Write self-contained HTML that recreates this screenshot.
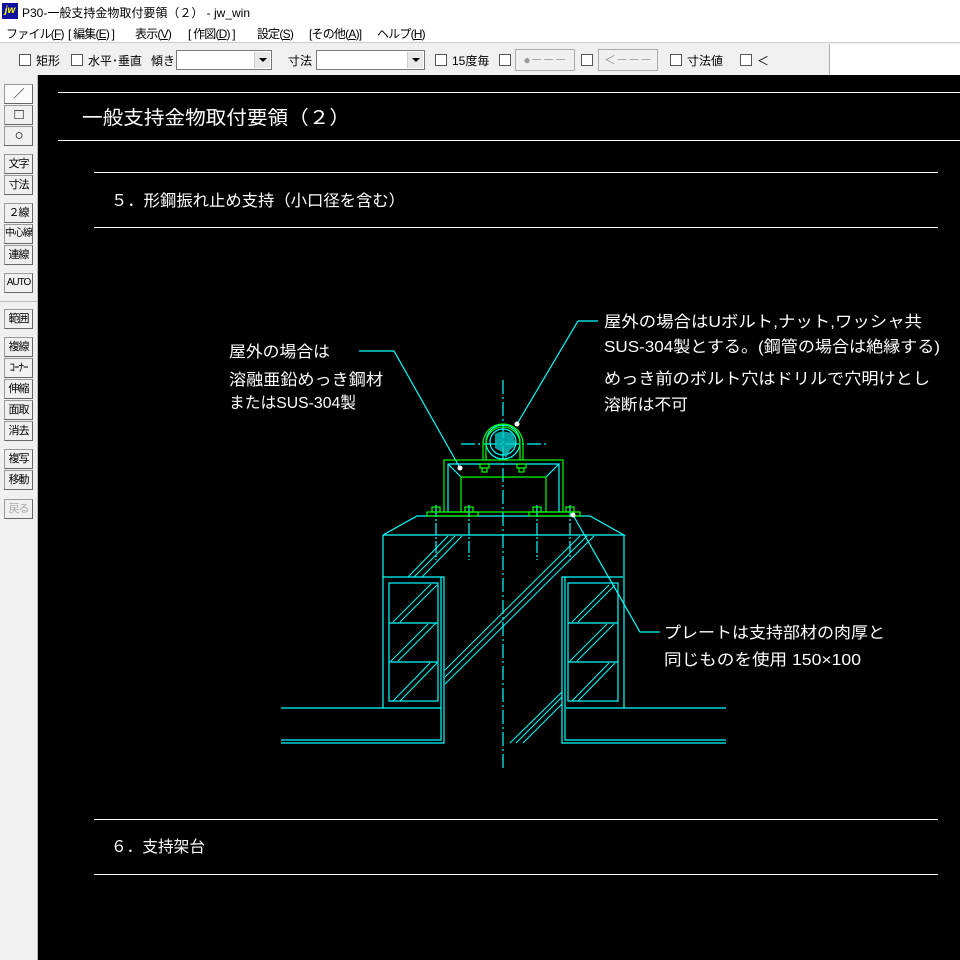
<!DOCTYPE html>
<html><head><meta charset="utf-8"><style>
*{margin:0;padding:0;box-sizing:border-box}
body{width:960px;height:960px;overflow:hidden;background:#f0f0f0;font-family:"Liberation Sans","Noto Sans CJK JP",sans-serif;font-size:12px;color:#000;position:relative}
.title{position:absolute;left:0;top:0;width:960px;height:22px;background:#fff;}
.title span{position:absolute;left:22px;top:4px;font-size:12px}
.logo{position:absolute;left:2px;top:3px;width:16px;height:16px;background:#1010a0;color:#ff0;font-weight:bold;font-style:italic;font-size:10px;line-height:16px;text-align:center}
.menu{position:absolute;left:0;top:22px;width:960px;height:21px;background:#fff;border-bottom:1px solid #ccc}
.menu span{position:absolute;top:3px;font-size:12px;letter-spacing:-0.8px;white-space:nowrap}
.tb{position:absolute;left:0;top:43px;width:960px;height:32px;background:#f0f0f0}
.tb span{position:absolute;top:9px;font-size:12px;white-space:nowrap}
.cb{position:absolute;top:11px;width:12px;height:12px;border:1px solid #555;background:#fff}
.combo{position:absolute;top:7px;height:20px;border:1px solid #777;background:#fff}
.combo i{position:absolute;right:1px;top:1px;width:16px;height:16px;background:#e8e8e8;border-left:1px solid #ccc}
.combo i:after{content:"";position:absolute;left:4px;top:6px;border-left:4px solid transparent;border-right:4px solid transparent;border-top:4px solid #000}
.gb{position:absolute;top:6px;height:22px;border:1px solid #aaa;background:#f0f0f0;color:#999;font-size:12px;text-align:center;line-height:20px}
.left{position:absolute;left:0;top:75px;width:38px;height:885px;background:#f0f0f0;border-right:1px solid #bbb}
.btn{position:absolute;left:4px;width:29px;height:20px;border:1px solid #999;border-right-color:#666;border-bottom-color:#666;background:#f0f0f0;font-size:11px;text-align:center;line-height:18px;letter-spacing:-1px;white-space:nowrap;overflow:hidden}
.canvas{position:absolute;left:38px;top:75px;width:922px;height:885px;background:#000}
</style></head><body>
<div class="title"><div class="logo">jw</div><span>P30-一般支持金物取付要領（２） - jw_win</span></div>
<div class="menu">
<span style="left:6px">ファイル(<u>F</u>)</span><span style="left:68px">[ 編集(<u>E</u>) ]</span><span style="left:135px">表示(<u>V</u>)</span><span style="left:188px">[ 作図(<u>D</u>) ]</span><span style="left:257px">設定(<u>S</u>)</span><span style="left:309px">[その他(<u>A</u>)]</span><span style="left:377px">ヘルプ(<u>H</u>)</span>
</div>
<div class="tb">
<div class="cb" style="left:19px"></div><span style="left:36px">矩形</span>
<div class="cb" style="left:71px"></div><span style="left:88px">水平･垂直</span><span style="left:151px">傾き</span>
<div class="combo" style="left:176px;width:96px"><i></i></div>
<span style="left:288px">寸法</span>
<div class="combo" style="left:316px;width:109px"><i></i></div>
<div class="cb" style="left:435px"></div><span style="left:452px">15度毎</span>
<div class="cb" style="left:499px"></div>
<div class="gb" style="left:515px;width:60px">●－－－</div>
<div class="cb" style="left:581px"></div>
<div class="gb" style="left:598px;width:60px">＜－－－</div>
<div class="cb" style="left:670px"></div><span style="left:687px">寸法値</span>
<div class="cb" style="left:740px"></div><span style="left:757px">＜</span>
<div style="position:absolute;left:829px;top:1px;width:131px;height:31px;background:#fff;border-left:1px solid #aaa"></div>
</div>
<div class="left">
<div class="btn" style="top:9px;background:#fafafa">／</div>
<div class="btn" style="top:30px;font-size:15px">□</div>
<div class="btn" style="top:51px;font-size:15px">○</div>
<div class="btn" style="top:79px">文字</div>
<div class="btn" style="top:100px">寸法</div>
<div class="btn" style="top:128px">２線</div>
<div class="btn" style="top:149px;font-size:10px">中心線</div>
<div class="btn" style="top:170px">連線</div>
<div class="btn" style="top:198px;font-size:10px">AUTO</div>
<div style="position:absolute;left:0;top:226px;width:38px;border-top:1px solid #bbb"></div>
<div class="btn" style="top:234px">範囲</div>
<div class="btn" style="top:262px">複線</div>
<div class="btn" style="top:283px">ｺｰﾅｰ</div>
<div class="btn" style="top:304px">伸縮</div>
<div class="btn" style="top:325px">面取</div>
<div class="btn" style="top:346px">消去</div>
<div class="btn" style="top:374px">複写</div>
<div class="btn" style="top:395px">移動</div>
<div class="btn" style="top:424px;color:#aaa">戻る</div>
</div>
<div class="canvas"></div>
<svg style="position:absolute;left:0;top:0" width="960" height="960" viewBox="0 0 960 960" font-family="Liberation Sans,Noto Sans CJK JP,sans-serif">
<g stroke="#fff" stroke-width="1" shape-rendering="crispEdges">
<line x1="58" y1="92.5" x2="960" y2="92.5"/><line x1="58" y1="140.5" x2="960" y2="140.5"/>
<line x1="94" y1="172.5" x2="938" y2="172.5"/><line x1="94" y1="227.5" x2="938" y2="227.5"/>
<line x1="94" y1="819.5" x2="938" y2="819.5"/><line x1="94" y1="874.5" x2="938" y2="874.5"/>
</g>
<g fill="#fff">
<text x="82" y="124" font-size="19" textLength="268" lengthAdjust="spacingAndGlyphs">一般支持金物取付要領（２）</text>
<text x="111" y="206" font-size="16" textLength="294" lengthAdjust="spacingAndGlyphs">５．形鋼振れ止め支持（小口径を含む）</text>
<text x="111" y="852" font-size="16" textLength="94" lengthAdjust="spacingAndGlyphs">６．支持架台</text>
<g font-size="16">
<text x="229" y="357" textLength="101" lengthAdjust="spacingAndGlyphs">屋外の場合は</text>
<text x="229" y="385" textLength="154" lengthAdjust="spacingAndGlyphs">溶融亜鉛めっき鋼材</text>
<text x="229" y="408" textLength="127" lengthAdjust="spacingAndGlyphs">またはSUS-304製</text>
<text x="604" y="327" textLength="318" lengthAdjust="spacingAndGlyphs">屋外の場合はUボルト,ナット,ワッシャ共</text>
<text x="604" y="352" textLength="336" lengthAdjust="spacingAndGlyphs">SUS-304製とする。(鋼管の場合は絶縁する)</text>
<text x="604" y="384" textLength="326" lengthAdjust="spacingAndGlyphs">めっき前のボルト穴はドリルで穴明けとし</text>
<text x="604" y="410" textLength="84" lengthAdjust="spacingAndGlyphs">溶断は不可</text>
<text x="664" y="638" textLength="221" lengthAdjust="spacingAndGlyphs">プレートは支持部材の肉厚と</text>
<text x="664" y="665" textLength="197" lengthAdjust="spacingAndGlyphs">同じものを使用 150×100</text>
</g>
</g>
<g stroke="#0ff" stroke-width="1.2" fill="none">
<polyline points="359,351 394,351 460,468"/>
<polyline points="598,321 578,321 517,424"/>
<polyline points="573,515 640,632 660,632"/>
<line x1="503" y1="380" x2="503" y2="770" stroke-dasharray="14,3,2,3"/>
<line x1="461" y1="444" x2="546" y2="444" stroke-dasharray="14,3,2,3"/>
<polyline points="383,535 417,516 590,516 624,535 383,535"/>
<line x1="383" y1="535" x2="383" y2="708"/>
<line x1="624" y1="535" x2="624" y2="708"/>
<polyline points="383,577 444,577 444,743 281,743"/>
<polyline points="441,577 441,740 281,740"/>
<line x1="281" y1="708" x2="441" y2="708"/>
<rect x="389" y="583" width="49" height="118"/>
<line x1="389" y1="623" x2="438" y2="623"/><line x1="389" y1="662" x2="438" y2="662"/>
<g stroke-width="1">
<line x1="393" y1="622" x2="431" y2="584"/><line x1="400" y1="622" x2="437" y2="585"/>
<line x1="391" y1="661" x2="428" y2="624"/><line x1="398" y1="661" x2="436" y2="623"/>
<line x1="393" y1="701" x2="430" y2="663"/><line x1="400" y1="701" x2="437" y2="663"/>
</g>
<polyline points="623,577 562,577 562,743 726,743"/>
<polyline points="565,577 565,740 726,740"/>
<line x1="566" y1="708" x2="726" y2="708"/>
<rect x="568" y="583" width="50" height="118"/>
<line x1="568" y1="623" x2="618" y2="623"/><line x1="568" y1="662" x2="618" y2="662"/>
<g stroke-width="1">
<line x1="572" y1="622" x2="609" y2="585"/><line x1="578" y1="622" x2="615" y2="585"/>
<line x1="570" y1="661" x2="607" y2="624"/><line x1="577" y1="661" x2="614" y2="624"/>
<line x1="572" y1="701" x2="609" y2="663"/><line x1="578" y1="701" x2="615" y2="663"/>
</g>
<g stroke-width="1">
<line x1="408" y1="577" x2="448" y2="536"/><line x1="414" y1="577" x2="455" y2="536"/><line x1="422" y1="577" x2="462" y2="536"/>
<line x1="445" y1="670" x2="580" y2="536"/><line x1="445" y1="677" x2="587" y2="536"/><line x1="445" y1="684" x2="594" y2="536"/>
<line x1="510" y1="743" x2="562" y2="692"/><line x1="516" y1="743" x2="562" y2="697"/><line x1="523" y1="743" x2="562" y2="704"/>
</g>
<polyline points="448,512 448,464 559,464 559,512"/>
<line x1="448" y1="464" x2="461" y2="477"/><line x1="559" y1="464" x2="546" y2="477"/>
<g stroke-dasharray="12,2,2,2"><line x1="436" y1="505" x2="436" y2="560"/><line x1="469" y1="505" x2="469" y2="560"/><line x1="537" y1="505" x2="537" y2="560"/><line x1="570" y1="505" x2="570" y2="560"/></g>
<circle cx="503" cy="442" r="17"/>
<circle cx="503" cy="442" r="13"/>
</g>
<g stroke="#0f0" stroke-width="1.2" fill="none">
<rect x="444" y="460" width="119" height="52"/>
<polyline points="461,512 461,477 546,477 546,512"/>
<rect x="427" y="512" width="51" height="4"/>
<rect x="529" y="512" width="51" height="4"/>
<path d="M486,460 V444 A17,17 0 0 1 520,444 V460"/>
<path d="M483,460 V444 A20,20 0 0 1 523,444 V460"/>
<rect x="480" y="464" width="9" height="4"/><rect x="482" y="468" width="5" height="4"/>
<rect x="517" y="464" width="9" height="4"/><rect x="519" y="468" width="5" height="4"/>
<rect x="432" y="507" width="8" height="5"/><rect x="465" y="507" width="8" height="5"/>
<rect x="533" y="507" width="8" height="5"/><rect x="566" y="507" width="8" height="5"/>
</g>
<path d="M495,434 Q503,429 513,434 L516,445 L510,450 L506,458 L502,452 L495,448 Z" fill="#0cc" opacity="0.8"/>
<g fill="#fff"><circle cx="517" cy="424" r="2.5"/><circle cx="460" cy="468" r="2.5"/><circle cx="573" cy="515" r="2.5"/></g>
</svg>
</body></html>
